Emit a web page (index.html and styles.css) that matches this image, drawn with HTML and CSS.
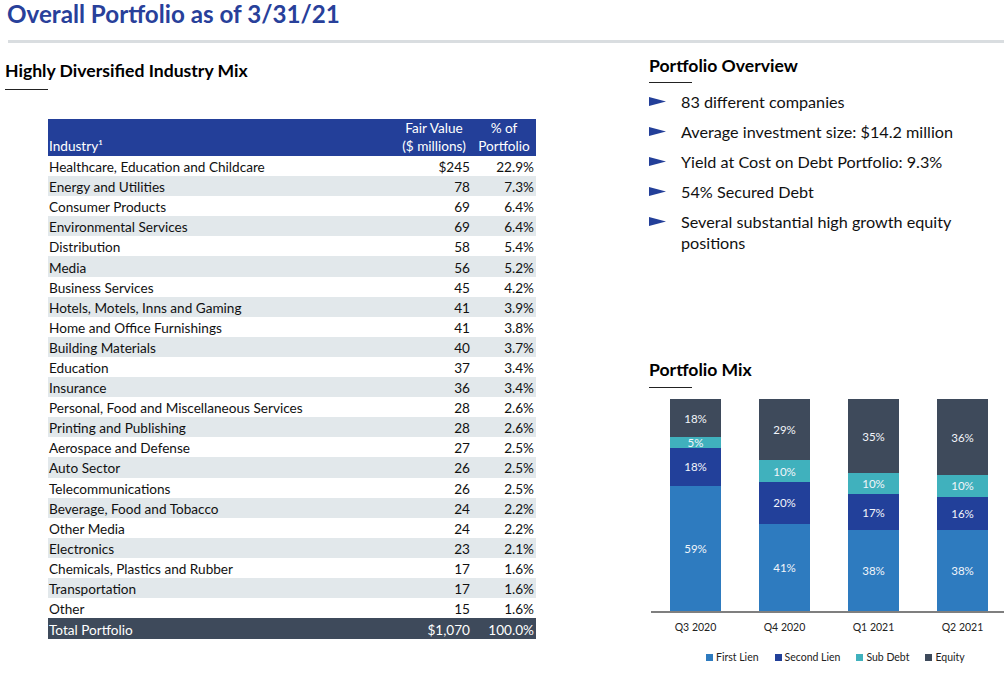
FILE: index.html
```html
<!DOCTYPE html>
<html>
<head>
<meta charset="utf-8">
<link rel="stylesheet" href="styles.css">
</head>
<body>
<div class="page">
  <header class="title-bar">
    <h1 class="title">Overall Portfolio as of 3/31/21</h1>
    <div class="title-rule"></div>
  </header>
  <div class="content">
    <section class="left">
      <h2 class="section-head head-left">Highly Diversified Industry Mix</h2>
      <div class="underline ul-left"></div>
      <table class="industry">
        <colgroup><col class="c-name"><col class="c-val"><col class="c-pct"></colgroup>
        <thead>
          <tr>
            <th class="th-name">Industry¹</th>
            <th class="th-num">Fair Value<br>($ millions)</th>
            <th class="th-num">% of<br>Portfolio</th>
          </tr>
        </thead>
        <tbody>
          <tr><td>Healthcare, Education and Childcare</td><td class="num">$245</td><td class="num">22.9%</td></tr>
          <tr class="alt"><td>Energy and Utilities</td><td class="num">78</td><td class="num">7.3%</td></tr>
          <tr><td>Consumer Products</td><td class="num">69</td><td class="num">6.4%</td></tr>
          <tr class="alt"><td>Environmental Services</td><td class="num">69</td><td class="num">6.4%</td></tr>
          <tr><td>Distribution</td><td class="num">58</td><td class="num">5.4%</td></tr>
          <tr class="alt"><td>Media</td><td class="num">56</td><td class="num">5.2%</td></tr>
          <tr><td>Business Services</td><td class="num">45</td><td class="num">4.2%</td></tr>
          <tr class="alt"><td>Hotels, Motels, Inns and Gaming</td><td class="num">41</td><td class="num">3.9%</td></tr>
          <tr><td>Home and Office Furnishings</td><td class="num">41</td><td class="num">3.8%</td></tr>
          <tr class="alt"><td>Building Materials</td><td class="num">40</td><td class="num">3.7%</td></tr>
          <tr><td>Education</td><td class="num">37</td><td class="num">3.4%</td></tr>
          <tr class="alt"><td>Insurance</td><td class="num">36</td><td class="num">3.4%</td></tr>
          <tr><td>Personal, Food and Miscellaneous Services</td><td class="num">28</td><td class="num">2.6%</td></tr>
          <tr class="alt"><td>Printing and Publishing</td><td class="num">28</td><td class="num">2.6%</td></tr>
          <tr><td>Aerospace and Defense</td><td class="num">27</td><td class="num">2.5%</td></tr>
          <tr class="alt"><td>Auto Sector</td><td class="num">26</td><td class="num">2.5%</td></tr>
          <tr><td>Telecommunications</td><td class="num">26</td><td class="num">2.5%</td></tr>
          <tr class="alt"><td>Beverage, Food and Tobacco</td><td class="num">24</td><td class="num">2.2%</td></tr>
          <tr><td>Other Media</td><td class="num">24</td><td class="num">2.2%</td></tr>
          <tr class="alt"><td>Electronics</td><td class="num">23</td><td class="num">2.1%</td></tr>
          <tr><td>Chemicals, Plastics and Rubber</td><td class="num">17</td><td class="num">1.6%</td></tr>
          <tr class="alt"><td>Transportation</td><td class="num">17</td><td class="num">1.6%</td></tr>
          <tr><td>Other</td><td class="num">15</td><td class="num">1.6%</td></tr>
          <tr class="total"><td>Total Portfolio</td><td class="num">$1,070</td><td class="num">100.0%</td></tr>
        </tbody>
      </table>
    </section>
    <section class="right">
      <h2 class="section-head head-right">Portfolio Overview</h2>
      <div class="underline ul-right"></div>
      <ul class="bullets">
        <li><svg class="arrow" width="17" height="9" viewBox="0 0 17 9"><polygon points="0,0 17,4.5 0,9"/></svg><span>83 different companies</span></li>
        <li><svg class="arrow" width="17" height="9" viewBox="0 0 17 9"><polygon points="0,0 17,4.5 0,9"/></svg><span>Average investment size: $14.2 million</span></li>
        <li><svg class="arrow" width="17" height="9" viewBox="0 0 17 9"><polygon points="0,0 17,4.5 0,9"/></svg><span>Yield at Cost on Debt Portfolio: 9.3%</span></li>
        <li><svg class="arrow" width="17" height="9" viewBox="0 0 17 9"><polygon points="0,0 17,4.5 0,9"/></svg><span>54% Secured Debt</span></li>
        <li><svg class="arrow" width="17" height="9" viewBox="0 0 17 9"><polygon points="0,0 17,4.5 0,9"/></svg><span>Several substantial high growth equity positions</span></li>
      </ul>
      <h2 class="section-head head-mix">Portfolio Mix</h2>
      <div class="underline ul-mix"></div>
      <div class="chart">
        <div class="plot">
          <div class="cat"><div class="bar">
            <div class="seg equity" style="height:18%">18%</div>
            <div class="seg sub" style="height:5%">5%</div>
            <div class="seg second" style="height:18%">18%</div>
            <div class="seg first" style="height:59%">59%</div>
          </div></div>
          <div class="cat"><div class="bar">
            <div class="seg equity" style="height:29%">29%</div>
            <div class="seg sub" style="height:10%">10%</div>
            <div class="seg second" style="height:20%">20%</div>
            <div class="seg first" style="height:41%">41%</div>
          </div></div>
          <div class="cat"><div class="bar">
            <div class="seg equity" style="height:35%">35%</div>
            <div class="seg sub" style="height:10%">10%</div>
            <div class="seg second" style="height:17%">17%</div>
            <div class="seg first" style="height:38%">38%</div>
          </div></div>
          <div class="cat"><div class="bar">
            <div class="seg equity" style="height:36%">36%</div>
            <div class="seg sub" style="height:10%">10%</div>
            <div class="seg second" style="height:16%">16%</div>
            <div class="seg first" style="height:38%">38%</div>
          </div></div>
        </div>
        <div class="cats">
          <div class="cat-label">Q3 2020</div>
          <div class="cat-label">Q4 2020</div>
          <div class="cat-label">Q1 2021</div>
          <div class="cat-label">Q2 2021</div>
        </div>
        <div class="legend">
          <span class="key"><i class="sw first"></i>First Lien</span>
          <span class="key"><i class="sw second"></i>Second Lien</span>
          <span class="key"><i class="sw sub"></i>Sub Debt</span>
          <span class="key"><i class="sw equity"></i>Equity</span>
        </div>
      </div>
    </section>
  </div>
</div>
</body>
</html>
```
FILE: styles.css
```css
html, body {
  margin: 0;
  padding: 0;
  overflow: hidden;
  background: #fff;
}
body {
  font-family: Lato, "Open Sans", sans-serif;
  color: #111;
}
.page {
  width: 1004px;
  height: 676px;
  overflow: hidden;
}
.title {
  margin: 0;
  padding-left: 7px;
  font-size: 24.2px;
  line-height: 28px;
  font-weight: 700;
  color: #28409a;
}
.title-rule {
  margin: 12px 0 0 8px;
  height: 3px;
  background: #d9dde0;
}
.content {
  display: flex;
}
.left {
  width: 649px;
  flex: none;
}
.right {
  flex: 1;
  min-width: 0;
}
.section-head {
  margin: 0;
  font-size: 17.6px;
  line-height: 20px;
  font-weight: 700;
  color: #000;
}
.head-left {
  margin: 18px 0 0 5px;
}
.underline {
  width: 43px;
  height: 1px;
  background: #222;
}
.ul-left {
  margin: 8px 0 0 5px;
}
.industry {
  margin: 29px 0 0 48px;
  width: 488px;
  border-collapse: collapse;
  table-layout: fixed;
  font-size: 13.6px;
}
.c-name { width: 348px; }
.c-val { width: 76px; }
.c-pct { width: 64px; }
.industry th {
  background: #233f99;
  color: #fff;
  font-weight: 400;
  line-height: 17.5px;
  padding: 1px 2px;
  vertical-align: bottom;
}
.th-name {
  text-align: left;
  padding-left: 1px !important;
}
.th-num {
  text-align: center;
}
.industry td {
  height: 20.1px;
  line-height: 18px;
  padding: 2px 2px 0 1px;
  box-sizing: border-box;
  white-space: nowrap;
}
.industry td.num {
  text-align: right;
}
.industry tr.alt td {
  background: #e2e8eb;
}
.industry tr.total td {
  background: #3e4a5b;
  color: #fff;
  height: 21px;
}
.head-right {
  margin: 13px 0 0 0;
}
.ul-right {
  margin: 6px 0 0 0;
}
.bullets {
  list-style: none;
  margin: 8px 0 0 0;
  padding: 0;
  font-size: 16.2px;
  line-height: 21px;
  color: #111;
}
.bullets li {
  display: flex;
  align-items: flex-start;
  margin-bottom: 9px;
}
.arrow {
  flex: none;
  margin-top: 6px;
  margin-right: 15px;
  fill: #233f99;
}
.bullets span {
  width: 300px;
}
.head-mix {
  margin-top: 107px;
}
.ul-mix {
  margin: 7px 0 0 0;
}
.chart {
  margin: 11px 0 0 2px;
}
.plot {
  display: flex;
  width: 356px;
  height: 212px;
  border-bottom: 2px solid #7f7f7f;
}
.cat {
  width: 89px;
  flex: none;
  display: flex;
  justify-content: center;
}
.bar {
  width: 51px;
  height: 100%;
  display: flex;
  flex-direction: column;
}
.seg {
  display: flex;
  align-items: center;
  justify-content: center;
  overflow: hidden;
  color: #f2f5fa;
  font-size: 11.5px;
  line-height: 13px;
}
.equity { background: #3e4a5b; }
.sub { background: #40b1bd; }
.second { background: #22409a; }
.first { background: #2e7bbf; }
.cats {
  display: flex;
  margin-top: 7px;
}
.cat-label {
  width: 89px;
  flex: none;
  text-align: center;
  font-size: 10.5px;
  line-height: 14px;
  color: #222;
}
.legend {
  display: flex;
  gap: 16px;
  margin: 16px 0 0 55px;
  font-size: 10.5px;
  line-height: 14px;
  color: #222;
}
.key {
  display: flex;
  align-items: center;
}
.sw {
  display: block;
  width: 7px;
  height: 7px;
  margin-right: 3px;
}
```
